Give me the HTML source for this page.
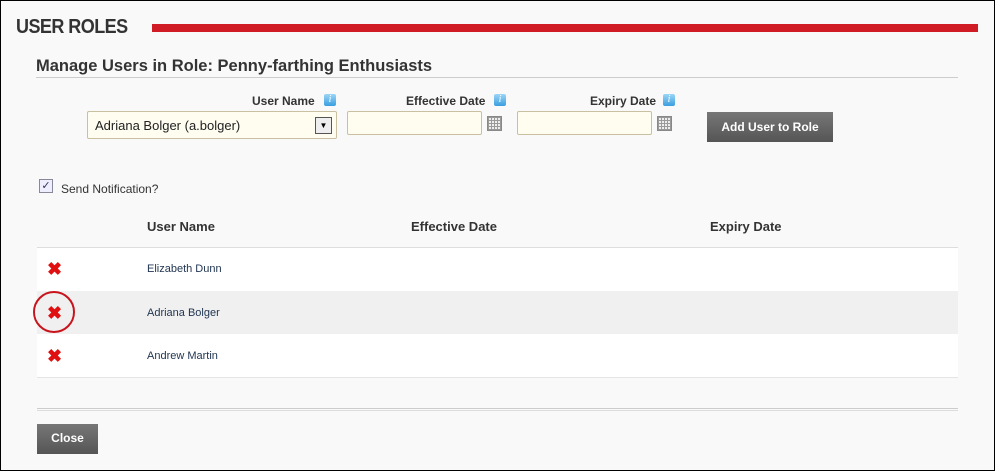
<!DOCTYPE html>
<html><head><style>
body{margin:0;width:995px;height:471px;overflow:hidden;font-family:"Liberation Sans",sans-serif;}
#f{position:absolute;left:0;top:0;width:993px;height:469px;border:1px solid #000;background:#f9f9f9;}
.a{position:absolute;}
.lbl{font-size:12px;font-weight:bold;color:#333;}
.info{width:12px;height:12px;background:linear-gradient(#9dd6f7,#3a9ee0);border-radius:2px;color:#fff;font-size:10px;font-style:italic;text-align:center;line-height:12px;font-family:"Liberation Serif",serif;}
.inp{background:#fffdf0;border:1px solid #c8c0a0;border-radius:2px;}
.cal{width:13px;height:13px;border:1px solid #888;background:repeating-linear-gradient(90deg,#999 0 1px,transparent 1px 3px),repeating-linear-gradient(#999 0 1px,#eee 1px 3px);}
.btn{background:linear-gradient(#777,#555);color:#fff;font-weight:bold;font-size:12px;text-align:center;}
.x{font-size:18px;color:#e01010;font-weight:bold;line-height:18px;}
.nm{font-size:11px;color:#1f3350;}
.th{font-size:13px;font-weight:bold;color:#333;}
</style></head><body><div id="f">
<div class="a" style="left:15px;top:15px;font-size:20px;font-weight:bold;color:#333;letter-spacing:-0.6px;transform:scaleX(0.9);transform-origin:left;">USER ROLES</div>
<div class="a" style="left:151px;top:23px;width:826px;height:8px;background:#d01c24;"></div>
<div class="a" style="left:35px;top:56px;font-size:16.5px;font-weight:bold;color:#333;">Manage Users in Role: Penny-farthing Enthusiasts</div>
<div class="a" style="left:35px;top:76px;width:922px;height:1px;background:#ccc;"></div>
<div class="a lbl" style="left:251px;top:93px;">User Name</div><div class="a info" style="left:323px;top:93px;">i</div>
<div class="a lbl" style="left:405px;top:93px;">Effective Date</div><div class="a info" style="left:493px;top:93px;">i</div>
<div class="a lbl" style="left:589px;top:93px;">Expiry Date</div><div class="a info" style="left:662px;top:93px;">i</div>
<div class="a inp" style="left:86px;top:110px;width:248px;height:26px;"></div>
<div class="a" style="left:94px;top:117px;font-size:13px;color:#222;">Adriana Bolger (a.bolger)</div>
<div class="a" style="left:314px;top:116px;width:15px;height:15px;border:1px solid #555;background:#eee;font-size:8px;text-align:center;line-height:15px;">▼</div>
<div class="a inp" style="left:346px;top:110px;width:133px;height:22px;"></div>
<div class="a cal" style="left:486px;top:115px;"></div>
<div class="a inp" style="left:516px;top:110px;width:133px;height:22px;"></div>
<div class="a cal" style="left:656px;top:115px;"></div>
<div class="a btn" style="left:706px;top:111px;width:126px;height:30px;line-height:30px;">Add User to Role</div>
<div class="a" style="left:38px;top:178px;width:12px;height:12px;border:1px solid #889;background:#eef;font-size:11px;line-height:12px;color:#335;text-align:center;">✓</div>
<div class="a" style="left:60px;top:181px;font-size:12px;color:#333;">Send Notification?</div>
<div class="a th" style="left:146px;top:218px;">User Name</div>
<div class="a th" style="left:410px;top:218px;">Effective Date</div>
<div class="a th" style="left:709px;top:218px;">Expiry Date</div>
<div class="a" style="left:36px;top:246px;width:921px;height:1px;background:#ddd;"></div>
<div class="a" style="left:36px;top:247px;width:921px;height:43px;background:#fff;"></div>
<div class="a" style="left:36px;top:290px;width:921px;height:43px;background:#f0f0f0;"></div>
<div class="a" style="left:36px;top:333px;width:921px;height:43px;background:#fff;"></div>
<div class="a" style="left:36px;top:376px;width:921px;height:1px;background:#e4e4e4;"></div>
<div class="a x" style="left:46px;top:259px;">✖</div>
<div class="a x" style="left:46px;top:303px;">✖</div>
<div class="a x" style="left:46px;top:346px;">✖</div>
<div class="a" style="left:32px;top:290px;width:42px;height:42px;border:2px solid #c8141c;border-radius:50%;box-sizing:border-box;"></div>
<div class="a nm" style="left:146px;top:262px;">Elizabeth Dunn</div>
<div class="a nm" style="left:146px;top:306px;">Adriana Bolger</div>
<div class="a nm" style="left:146px;top:349px;">Andrew Martin</div>
<div class="a" style="left:36px;top:407px;width:921px;height:1px;background:#ccc;"></div>
<div class="a" style="left:36px;top:409px;width:921px;height:1px;background:#ddd;"></div>
<div class="a btn" style="left:36px;top:423px;width:61px;height:30px;line-height:28px;">Close</div>
</div></body></html>
